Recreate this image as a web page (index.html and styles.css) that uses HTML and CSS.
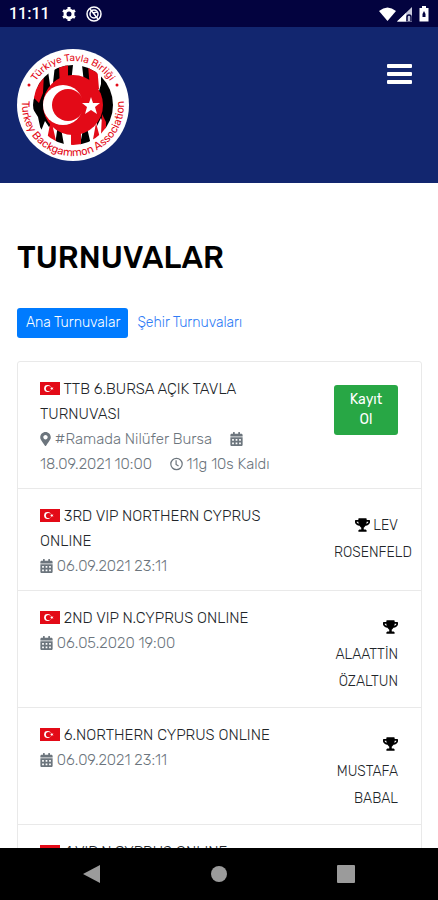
FILE: index.html
```html
<!DOCTYPE html>
<html lang="tr">
<head>
  <meta charset="UTF-8">
  <meta name="viewport" content="width=device-width, initial-scale=1">
  <title>Turnuvalar</title>
  <link rel="stylesheet" href="styles.css">
</head>
<body>

  <!-- Icons -->
  <svg class="sprite" aria-hidden="true">
    <symbol id="flag" viewBox="0 0 20 13">
      <rect width="20" height="13" fill="#e30a17"/>
      <circle cx="7.5" cy="6.5" r="3.4" fill="#fff"/>
      <circle cx="8.5" cy="6.5" r="2.6" fill="#e30a17"/>
      <path d="M10 6.5l1.3-.4.1-1.4.8 1.1 1.3-.4-.8 1.1.8 1.1-1.3-.4-.8 1.1-.1-1.4z" fill="#fff"/>
    </symbol>
    <symbol id="calendar" viewBox="0 0 448 512">
      <path fill="currentColor" d="M0 464c0 26.500 21.500 48 48 48h352c26.500 0 48-21.500 48-48V192H0v272zm320-196c0-6.600 5.400-12 12-12h40c6.600 0 12 5.400 12 12v40c0 6.600-5.400 12-12 12h-40c-6.600 0-12-5.400-12-12v-40zm0 128c0-6.600 5.400-12 12-12h40c6.600 0 12 5.400 12 12v40c0 6.600-5.400 12-12 12h-40c-6.600 0-12-5.400-12-12v-40zM192 268c0-6.600 5.400-12 12-12h40c6.600 0 12 5.400 12 12v40c0 6.600-5.400 12-12 12h-40c-6.600 0-12-5.400-12-12v-40zm0 128c0-6.600 5.400-12 12-12h40c6.600 0 12 5.400 12 12v40c0 6.600-5.400 12-12 12h-40c-6.600 0-12-5.400-12-12v-40zM64 268c0-6.600 5.400-12 12-12h40c6.600 0 12 5.400 12 12v40c0 6.600-5.400 12-12 12H76c-6.600 0-12-5.400-12-12v-40zm0 128c0-6.600 5.400-12 12-12h40c6.600 0 12 5.400 12 12v40c0 6.600-5.400 12-12 12H76c-6.600 0-12-5.400-12-12v-40zM400 64h-48V16c0-8.800-7.200-16-16-16h-32c-8.800 0-16 7.200-16 16v48H160V16c0-8.800-7.200-16-16-16h-32c-8.800 0-16 7.200-16 16v48H48C21.500 64 0 85.500 0 112v48h448v-48c0-26.500-21.500-48-48-48z"/>
    </symbol>
    <symbol id="marker" viewBox="0 0 384 512">
      <path fill="currentColor" d="M172 502C27 291 0 269 0 192 0 86 86 0 192 0s192 86 192 192c0 77-27 99-172 310-10 13-30 13-40 0zm20-230c44 0 80-36 80-80s-36-80-80-80-80 36-80 80 36 80 80 80z"/>
    </symbol>
    <symbol id="clock" viewBox="0 0 16 16">
      <circle cx="8" cy="8" r="7" fill="none" stroke="currentColor" stroke-width="1.5"/>
      <path d="M7.5 3.5v5l3 2" fill="none" stroke="currentColor" stroke-width="1.5"/>
    </symbol>
    <symbol id="trophy" viewBox="0 0 576 512">
      <path fill="currentColor" d="M552 64H448V24c0-13.300-10.700-24-24-24H152c-13.300 0-24 10.700-24 24v40H24C10.700 64 0 74.700 0 88v56c0 35.700 22.500 72.400 61.900 100.700 31.500 22.700 69.800 37.100 110 41.700C203.300 338.500 240 360 240 360v72h-48c-35.300 0-64 20.700-64 56v12c0 6.600 5.400 12 12 12h296c6.600 0 12-5.400 12-12v-12c0-35.300-28.700-56-64-56h-48v-72s36.700-21.500 68.100-73.600c40.300-4.600 78.600-19 110-41.700 39.300-28.300 61.900-65 61.900-100.700V88c0-13.300-10.700-24-24-24zM99.300 192.800C74.900 175.200 64 155.600 64 144v-16h64.200c1 32.600 5.800 61.200 12.800 86.200-15.100-5.200-29.200-12.400-41.700-21.400zM512 144c0 16.100-17.700 36.100-35.300 48.800-12.500 9-26.700 16.200-41.800 21.400 7-25 11.800-53.600 12.800-86.200H512v16z"/>
    </symbol>
  </svg>

  <div class="status-bar">
    <span class="time">11:11</span>
    <svg class="status-icon" viewBox="0 0 16 16">
      <g fill="none" stroke="#fff">
        <circle cx="8" cy="8" r="4" stroke-width="3"/>
        <path d="M8 1v2M8 13v2M2 4.5l1.8 1M12.2 10.5l1.8 1M2 11.5l1.8-1M12.2 5.5l1.8-1" stroke-width="3"/>
      </g>
    </svg>
    <svg class="status-icon" viewBox="0 0 16 16">
      <g fill="none" stroke="#fff" stroke-width="1.5">
        <circle cx="8" cy="8" r="7"/>
        <circle cx="8" cy="8" r="4"/>
        <path d="M4 3l8 10M7 7l4-1"/>
      </g>
    </svg>
    <svg class="signals" viewBox="0 0 52 18">
      <path d="M0 6Q8.500-1 17 6L8.500 16z" fill="#fff"/>
      <path d="M18 16.500L33 2v14.500z" fill="#c8c9dc"/>
      <path d="M18 16.500L27 8v8.500z" fill="#fff"/>
      <path d="M28 16v-4a2 2 0 0 1 4 0v4" fill="none" stroke="#03033f" stroke-width="1.5"/>
      <path d="M40.500 3h2.500V1h4v2h2.500v13.500h-9z" fill="#fff"/>
      <path d="M45 6l-1.500 3v3h3V9z" fill="#03033f"/>
    </svg>
  </div>

  <header class="header">
    <a href="#" aria-label="Türkiye Tavla Birliği">
      <svg class="logo" viewBox="0 0 114 114">
        <defs>
          <clipPath id="disc"><circle cx="57" cy="57" r="40"/></clipPath>
          <path id="arcTop" d="M13 57a44 44 0 0 1 88 0"/>
          <path id="arcBottom" d="M8 43A51 51 0 1 0 106 43"/>
        </defs>
        <circle cx="57" cy="57" r="56" fill="#fff"/>
        <!-- backgammon points behind the flag disc -->
        <g clip-path="url(#disc)">
          <rect x="17" y="17" width="80" height="80" fill="#fff"/>
          <path d="M22 28l10-5 2 14 5 14v22l-6 6-4-6-4 10-3-14-5-8V52l4-6zM39 17h18l-2 18H37zM66 17h15l-1 18H68zM85 22l12 16v32l-6 14-6-14-4 8V50l4-14zM39 97l4-28 5 28zM64 97l5-26 6 26z" fill="#000"/>
          <path d="M20 34l8-9-1 20-4 10-5-5zM43 17h9v24h-8zM72 17h9l2 24h-9zM30 97l5-26 6 26zM55 97V82h10v15zM76 97l4-22 6 22zM86 66l4 8v12h-5z" fill="#e30a17"/>
        </g>
        <circle cx="57" cy="57" r="30" fill="#e30a17"/>
        <circle cx="47" cy="57" r="20" fill="#fff"/>
        <circle cx="52" cy="57" r="16" fill="#e30a17"/>
        <path d="M75 49l2 6 7 0-5 4 2 7-6-4-6 4 2-7-5-4 7 0z" fill="#fff"/>
        <circle cx="13" cy="37" r="1.5" fill="#e30a17"/>
        <circle cx="101" cy="37" r="1.5" fill="#e30a17"/>
        <text class="logo-text"><textPath href="#arcTop" startOffset="50%">Türkiye Tavla Birliği</textPath></text>
        <text class="logo-text large"><textPath href="#arcBottom" startOffset="50%">Turkey Backgammon Association</textPath></text>
      </svg>
    </a>
    <button class="menu-btn" aria-label="Menü">
      <span></span><span></span><span></span>
    </button>
  </header>

  <main class="content">
    <h1>TURNUVALAR</h1>

    <nav class="tabs">
      <a class="tab active" href="#">Ana Turnuvalar</a>
      <a class="tab" href="#">Şehir Turnuvaları</a>
    </nav>

    <ul class="tournaments">
      <li>
        <div>
          <h2><svg class="flag"><use href="#flag"/></svg> TTB 6.BURSA AÇIK TAVLA TURNUVASI</h2>
          <p>
            <span class="info"><svg class="icon narrow"><use href="#marker"/></svg> #Ramada Nilüfer Bursa</span>
            <span class="info"><svg class="icon"><use href="#calendar"/></svg> 18.09.2021 10:00</span>
            <span class="info"><svg class="icon"><use href="#clock"/></svg> 11g 10s Kaldı</span>
          </p>
        </div>
        <div class="side"><button class="register-btn">Kayıt Ol</button></div>
      </li>
      <li>
        <div>
          <h2><svg class="flag"><use href="#flag"/></svg> 3RD VIP NORTHERN CYPRUS ONLINE</h2>
          <p><svg class="icon"><use href="#calendar"/></svg> 06.09.2021 23:11</p>
        </div>
        <div class="side"><svg class="trophy"><use href="#trophy"/></svg> LEV ROSENFELD</div>
      </li>
      <li>
        <div>
          <h2><svg class="flag"><use href="#flag"/></svg> 2ND VIP N.CYPRUS ONLINE</h2>
          <p><svg class="icon"><use href="#calendar"/></svg> 06.05.2020 19:00</p>
        </div>
        <div class="side"><svg class="trophy"><use href="#trophy"/></svg> ALAATTİN ÖZALTUN</div>
      </li>
      <li>
        <div>
          <h2><svg class="flag"><use href="#flag"/></svg> 6.NORTHERN CYPRUS ONLINE</h2>
          <p><svg class="icon"><use href="#calendar"/></svg> 06.09.2021 23:11</p>
        </div>
        <div class="side"><svg class="trophy"><use href="#trophy"/></svg> MUSTAFA BABAL</div>
      </li>
      <li>
        <div>
          <h2><svg class="flag"><use href="#flag"/></svg> 4.VIP N.CYPRUS ONLINE</h2>
        </div>
      </li>
    </ul>
  </main>

  <div class="android-nav">
    <button aria-label="Geri"><svg viewBox="0 0 18 18"><path d="M0 9L17 0v18z"/></svg></button>
    <button aria-label="Ana ekran"><svg viewBox="0 0 18 18"><circle cx="9" cy="9" r="8"/></svg></button>
    <button aria-label="Son uygulamalar"><svg viewBox="0 0 18 18"><rect width="18" height="18" rx="1"/></svg></button>
  </div>

</body>
</html>
```

FILE: styles.css
```css
/* Base */
* { box-sizing: border-box; margin: 0; padding: 0; }
body {
  font-family: Rubik, Roboto, sans-serif;
  font-size: 15px;
  font-weight: 300;
  height: 100vh;
  display: flex;
  flex-direction: column;
  background: #fff;
  color: #212529;
}
button { border: none; font-family: inherit; cursor: pointer; }
a { text-decoration: none; }
.sprite { display: none; }

/* Status bar */
.status-bar {
  flex: none;
  display: flex;
  align-items: center;
  gap: 9px;
  height: 27px;
  padding: 0 7px 0 9px;
  background: #03033f;
  color: #fff;
}
.time {
  font-family: Roboto, sans-serif;
  font-size: 16px;
  font-weight: 500;
  margin-right: 2px;
}
.status-icon { width: 16px; height: 16px; }
.signals { width: 52px; height: 18px; margin-left: auto; }

/* Header */
.header {
  flex: none;
  display: flex;
  justify-content: space-between;
  align-items: flex-start;
  padding: 21px 26px 21px 16px;
  background: #12266f;
}
.logo { display: block; width: 114px; height: 114px; }
.logo-text {
  font-size: 10px;
  font-weight: 400;
  fill: #e30a17;
  text-anchor: middle;
}
.logo-text.large { font-size: 11px; }
.menu-btn {
  display: grid;
  gap: 4px;
  padding: 16px 0;
  background: none;
}
.menu-btn span {
  width: 25px;
  height: 4px;
  border-radius: 1px;
  background: #fff;
}

/* Content */
.content {
  flex: 1;
  min-height: 0;
  overflow: hidden;
  padding: 55px 16px 0 17px;
}
h1 {
  font-size: 31px;
  font-weight: 500;
  line-height: 40px;
  color: #000;
}
.tabs {
  display: flex;
  margin: 30px 0 23px;
}
.tab {
  padding: 0 8px 0 9px;
  border-radius: 3px;
  font-size: 14px;
  line-height: 30px;
  color: #2f7cf6;
}
.tab.active {
  background: #007bff;
  color: #fff;
}

/* Tournament list */
.tournaments {
  list-style: none;
  border: 1px solid #e9e9e9;
  border-radius: 3px;
}
.tournaments li {
  display: grid;
  grid-template-columns: 1fr 64px;
  gap: 32px;
  padding: 15px 23px 11px 22px;
  border-bottom: 1px solid #e9e9e9;
  line-height: 25px;
}
h2 {
  font-size: 15px;
  font-weight: 300;
  color: #212529;
}
.tournaments p { color: #6c757d; }
.info { margin-right: 14px; }
.flag {
  width: 20px;
  height: 13px;
  vertical-align: -1px;
}
.icon {
  width: 13px;
  height: 14px;
  vertical-align: -2px;
}
.icon.narrow { width: 11px; }
.side {
  padding-top: 8px;
  padding-bottom: 1px;
  font-size: 14px;
  line-height: 27px;
  text-align: right;
}
.trophy {
  width: 15px;
  height: 14px;
  vertical-align: -2px;
  color: #000;
}
.register-btn {
  display: block;
  width: 100%;
  padding: 5px 12px;
  border-radius: 3px;
  background: #28a745;
  color: #fff;
  font-size: 14px;
  font-weight: 400;
  line-height: 20px;
}

/* Android navigation */
.android-nav {
  flex: none;
  display: flex;
  justify-content: space-around;
  align-items: center;
  height: 52px;
  padding: 0 29px;
  background: #000;
}
.android-nav button { background: none; }
.android-nav svg {
  display: block;
  width: 18px;
  height: 18px;
  fill: #9b9b9b;
}
```
